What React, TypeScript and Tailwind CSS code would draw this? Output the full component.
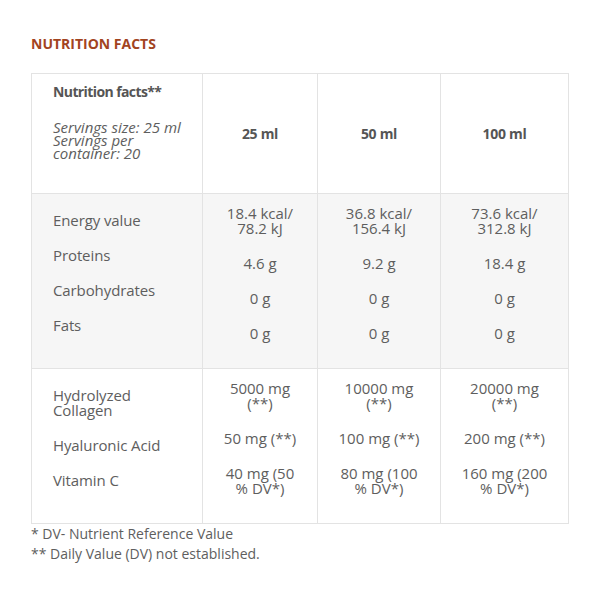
import React from 'react'

type Row = {
  label: React.ReactNode
  values: React.ReactNode[]
}

const basics: Row[] = [
  { label: 'Energy value', values: [<>18.4 kcal/<br />78.2 kJ</>, <>36.8 kcal/<br />156.4 kJ</>, <>73.6 kcal/<br />312.8 kJ</>] },
  { label: 'Proteins', values: ['4.6 g', '9.2 g', '18.4 g'] },
  { label: 'Carbohydrates', values: ['0 g', '0 g', '0 g'] },
  { label: 'Fats', values: ['0 g', '0 g', '0 g'] },
]

const actives: Row[] = [
  {
    label: <>Hydrolyzed<br />Collagen</>,
    values: [<>5000 mg<br />(**)</>, <>10000 mg<br />(**)</>, <>20000 mg<br />(**)</>],
  },
  { label: 'Hyaluronic Acid', values: ['50 mg (**)', '100 mg (**)', '200 mg (**)'] },
  {
    label: 'Vitamin C',
    values: [<>40 mg (50<br />% DV*)</>, <>80 mg (100<br />% DV*)</>, <>160 mg (200<br />% DV*)</>],
  },
]

const sizes = ['25 ml', '50 ml', '100 ml']

const Section: React.FC<{ rows: Row[]; gray?: boolean }> = ({ rows, gray }) => {
  const bg = gray ? 'bg-[#f6f6f6]' : 'bg-white'
  return (
    <>
      <div className={`${bg} border-r border-b border-[#e3e3e3] pl-[21px] pt-[19px] flex flex-col gap-[20px] leading-[15px] tracking-[-0.1px]`}>
        {rows.map((r, i) => (
          <div key={i}>{r.label}</div>
        ))}
      </div>
      {[0, 1, 2].map((c) => (
        <div
          key={c}
          className={`${bg} border-r border-b border-[#e3e3e3] pt-[12px] pb-[27px] flex flex-col items-center text-center gap-[20px] leading-[15px]`}
        >
          {rows.map((r, i) => (
            <div key={i}>{r.values[c]}</div>
          ))}
        </div>
      ))}
    </>
  )
}

export default function App() {
  return (
    <div className="bg-white w-[600px] h-[600px] px-[31px] pt-[35px] text-[#5e5e5e] font-['Open_Sans',sans-serif] text-[15px]">
      <h2 className="text-[#a2441f] font-bold text-[14px] leading-[18px]">NUTRITION FACTS</h2>
      <div className="mt-[20px] grid grid-cols-[171px_115px_123px_128px] border-l border-t border-[#e3e3e3] w-[538px]">
        <div className="border-r border-b border-[#e3e3e3] pl-[21px] pt-[9px] pb-[33px]">
          <div className="font-bold text-[#555] text-[14px] tracking-[-0.6px] leading-[18px]">Nutrition facts**</div>
          <div className="mt-[20px] italic leading-[13px]">
            Servings size: 25 ml
            <br />
            Servings per
            <br />
            container: 20
          </div>
        </div>
        {sizes.map((s) => (
          <div key={s} className="border-r border-b border-[#e3e3e3] flex items-center justify-center font-bold text-[14px] tracking-[-0.3px] text-[#555]">
            {s}
          </div>
        ))}
        <Section rows={basics} gray />
        <Section rows={actives} />
      </div>
      <div className="leading-[20px] text-[14px]">
        <p>* DV- Nutrient Reference Value</p>
        <p>** Daily Value (DV) not established.</p>
      </div>
    </div>
  )
}
